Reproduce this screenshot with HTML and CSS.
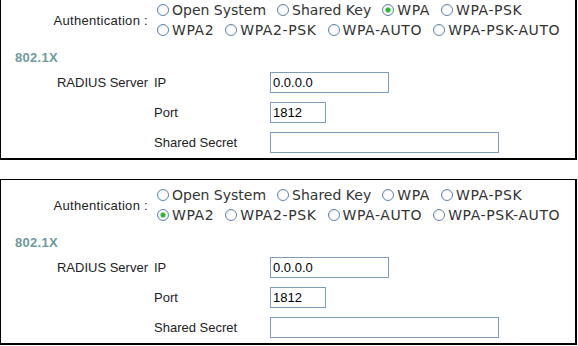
FILE: index.html
```html
<!DOCTYPE html>
<html lang="en">
<head>
    <meta charset="UTF-8">
    <meta name="viewport" content="width=device-width, initial-scale=1.0">
    <title>Wireless Security</title>
    <link rel="stylesheet" href="styles.css">
</head>
<body>
    <div class="panel panel-first">
        <div class="auth-row">
            <div class="auth-label">Authentication :</div>
            <div class="options">
                <div class="option-row">
                    <label class="option"><input type="radio" name="auth1">Open System</label>
                    <label class="option"><input type="radio" name="auth1">Shared Key</label>
                    <label class="option caps"><input type="radio" name="auth1" checked>WPA</label>
                    <label class="option caps"><input type="radio" name="auth1">WPA-PSK</label>
                </div>
                <div class="option-row">
                    <label class="option caps"><input type="radio" name="auth1">WPA2</label>
                    <label class="option caps"><input type="radio" name="auth1">WPA2-PSK</label>
                    <label class="option caps"><input type="radio" name="auth1">WPA-AUTO</label>
                    <label class="option caps"><input type="radio" name="auth1">WPA-PSK-AUTO</label>
                </div>
            </div>
        </div>

        <div class="section-title">802.1X</div>

        <div class="fields">
            <div class="field-label">RADIUS Server</div>
            <div class="field-name">IP</div>
            <div><input type="text" class="input-ip" value="0.0.0.0"></div>

            <div class="field-label"></div>
            <div class="field-name">Port</div>
            <div><input type="text" class="input-port" value="1812"></div>

            <div class="field-label"></div>
            <div class="field-name">Shared Secret</div>
            <div><input type="password" class="input-secret"></div>
        </div>
    </div>

    <div class="panel panel-second">
        <div class="auth-row">
            <div class="auth-label">Authentication :</div>
            <div class="options">
                <div class="option-row">
                    <label class="option"><input type="radio" name="auth2">Open System</label>
                    <label class="option"><input type="radio" name="auth2">Shared Key</label>
                    <label class="option caps"><input type="radio" name="auth2">WPA</label>
                    <label class="option caps"><input type="radio" name="auth2">WPA-PSK</label>
                </div>
                <div class="option-row">
                    <label class="option caps"><input type="radio" name="auth2" checked>WPA2</label>
                    <label class="option caps"><input type="radio" name="auth2">WPA2-PSK</label>
                    <label class="option caps"><input type="radio" name="auth2">WPA-AUTO</label>
                    <label class="option caps"><input type="radio" name="auth2">WPA-PSK-AUTO</label>
                </div>
            </div>
        </div>

        <div class="section-title">802.1X</div>

        <div class="fields">
            <div class="field-label">RADIUS Server</div>
            <div class="field-name">IP</div>
            <div><input type="text" class="input-ip" value="0.0.0.0"></div>

            <div class="field-label"></div>
            <div class="field-name">Port</div>
            <div><input type="text" class="input-port" value="1812"></div>

            <div class="field-label"></div>
            <div class="field-name">Shared Secret</div>
            <div><input type="password" class="input-secret"></div>
        </div>
    </div>
</body>
</html>
```

FILE: styles.css
```css
* {
    margin: 0;
    padding: 0;
    box-sizing: border-box;
}

body {
    font-family: 'Liberation Sans', Arial, sans-serif;
    font-size: 13px;
    color: #222;
    background-color: #fff;
    overflow: hidden;
}

.panel {
    width: 577px;
    height: 166px;
    border-top: 1px solid #000;
    border-left: 1px solid #000;
    border-right: 2px solid #000;
    border-bottom: 2px solid #000;
    padding-top: 5px;
}

.panel-first {
    margin-top: -6px;
}

.panel-second {
    margin-top: 19px;
}

.auth-row {
    display: grid;
    grid-template-columns: 153px 1fr;
    align-items: center;
}

.auth-label {
    text-align: right;
    padding-right: 6px;
    letter-spacing: 0.3px;
}

.options {
    margin-left: 3px;
    font-family: 'DejaVu Sans', Verdana, sans-serif;
    font-size: 14px;
    color: #333;
}

.option-row {
    display: flex;
    height: 20px;
    align-items: center;
}

.option {
    display: inline-flex;
    align-items: center;
    margin-right: 11px;
    white-space: nowrap;
}

.option.caps {
    letter-spacing: 0.6px;
}

.option input[type="radio"] {
    appearance: none;
    -webkit-appearance: none;
    width: 12px;
    height: 12px;
    margin-right: 3px;
    border: 1px solid #5f82a8;
    border-radius: 50%;
    background: radial-gradient(circle at 60% 60%, #fff 0, #fff 45%, #dde3ea 100%);
}

.option input[type="radio"]:checked {
    background: radial-gradient(circle, #2eb82e 0, #2eb82e 2px, #a8dca8 2.6px, #fff 3.4px, #fff 45%, #dde3ea 100%);
}

.section-title {
    margin-top: 10px;
    height: 16px;
    line-height: 16px;
    padding-left: 14px;
    font-weight: bold;
    color: #6f9a9c;
    letter-spacing: 0.3px;
}

.fields {
    margin-top: 1px;
    display: grid;
    grid-template-columns: 153px 116px 1fr;
    grid-auto-rows: 30px;
    align-items: center;
}

.field-label {
    text-align: right;
    padding-right: 6px;
}

.fields input {
    display: block;
    height: 21px;
    border: 1px solid #7f9db9;
    padding: 0 2px;
    font-family: 'Liberation Sans', Arial, sans-serif;
    font-size: 13px;
    color: #000;
    outline: none;
}

.input-ip {
    width: 119px;
}

.input-port {
    width: 56px;
}

.input-secret {
    width: 229px;
}
```
